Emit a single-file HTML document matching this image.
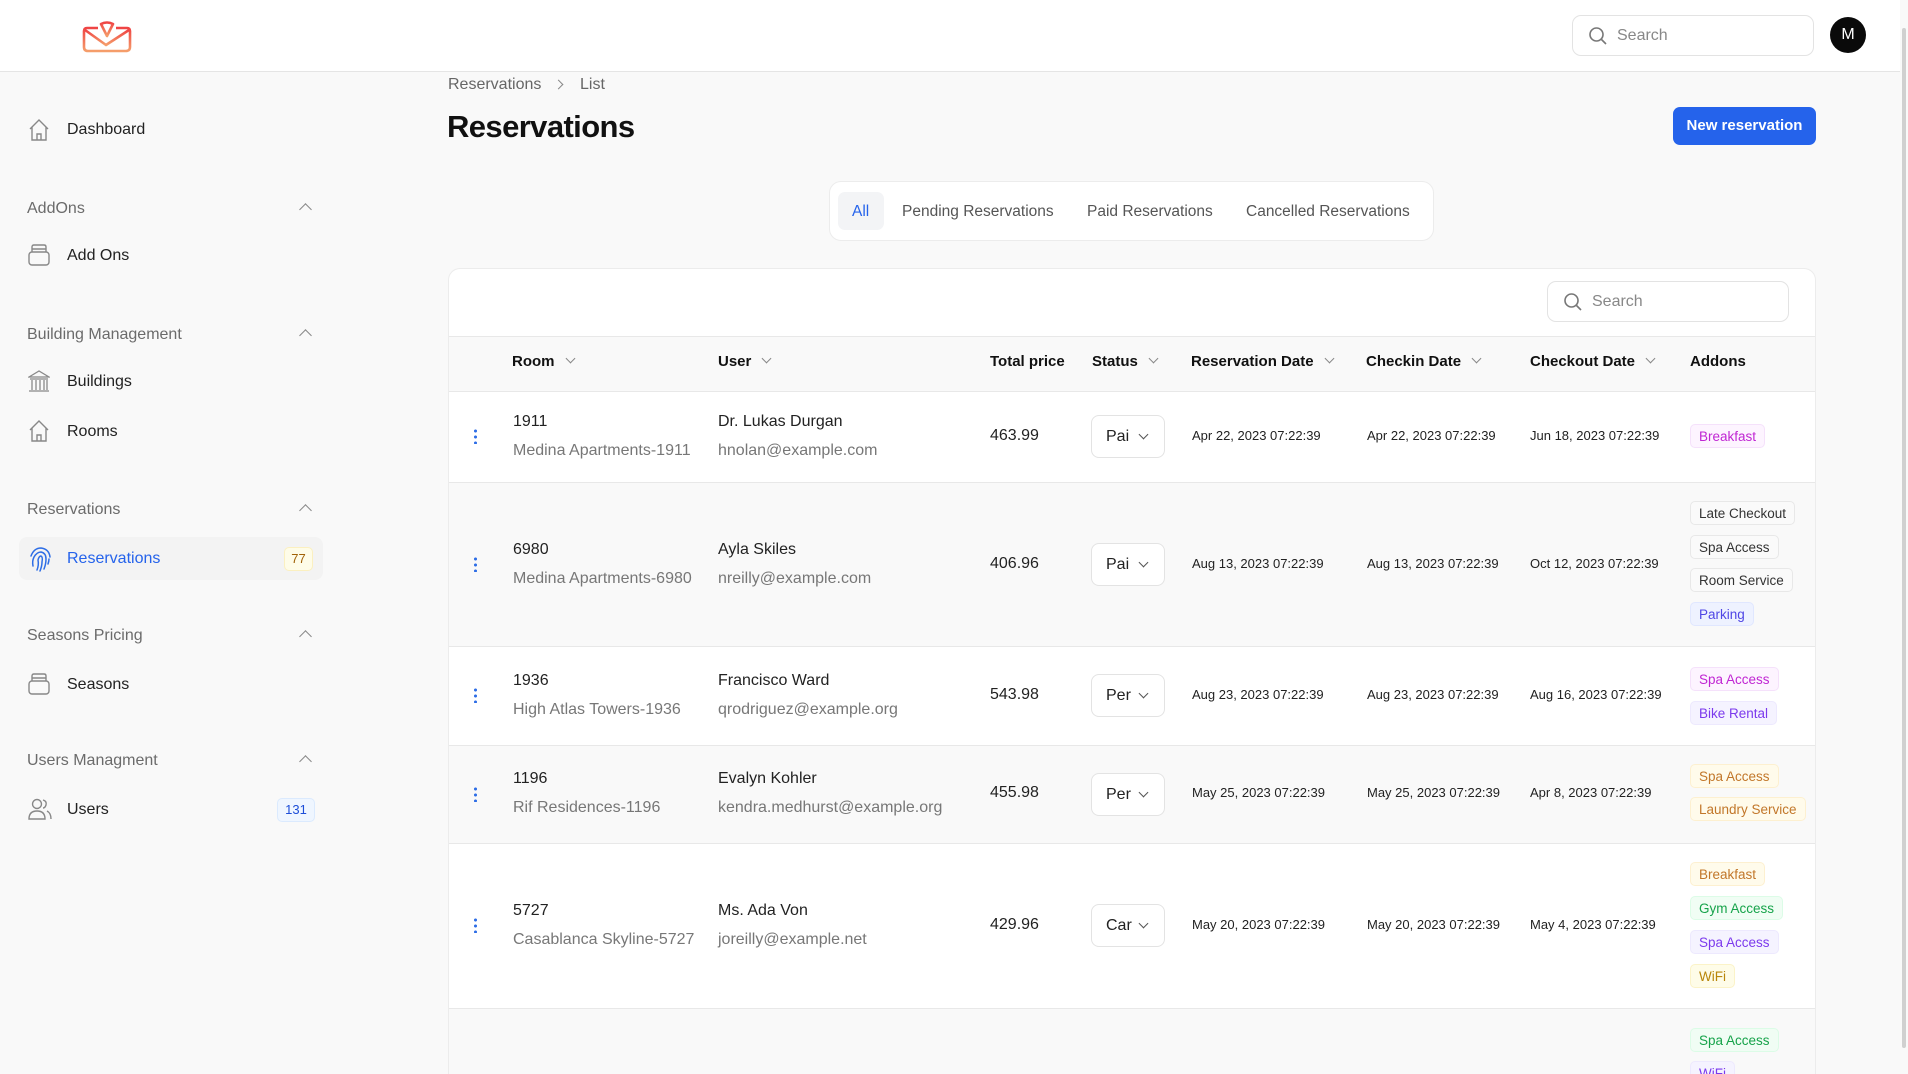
<!DOCTYPE html>
<html style="overflow:hidden;height:1074px"><head><meta charset="utf-8"><style>
*{box-sizing:border-box;margin:0;padding:0}
body{width:1908px;height:1074px;overflow:hidden;background:#f9f9f9;font-family:"Liberation Sans",sans-serif;color:#111;position:relative}
.a{position:absolute;white-space:nowrap}
.hdr{left:0;top:0;width:1900px;height:72px;background:#fff;border-bottom:1px solid #e5e5e5}
.sb{color:#6b6b6b;font-size:16px}
.nav{color:#222;font-size:16px}
.chev{width:9px;height:9px;border-left:1.6px solid #888;border-top:1.6px solid #888;transform:rotate(45deg)}
.dn{display:inline-block;width:7px;height:7px;border-right:1.4px solid #888;border-bottom:1.4px solid #888;transform:rotate(45deg);margin-left:12px;position:relative;top:-4px}
.th{font-size:15px;font-weight:bold;top:353px}
.t1{font-size:16px;color:#222}
.t2{font-size:16px;color:#777}
.dt{font-size:13px;color:#222}
.sel{width:74px;height:43px;background:#fff;border:1px solid #e3e3e3;border-radius:8px;font-size:16px;padding:12px 0 0 14px;color:#222}
.sel i{display:inline-block;width:7px;height:7px;border-right:1.5px solid #555;border-bottom:1.5px solid #555;transform:rotate(45deg);position:absolute;left:48px;top:15px}
.dots{width:3px;height:16px;background:radial-gradient(circle,#2e6ee6 1.4px,transparent 1.6px) 0 0/3px 6px repeat-y}
.bg{height:24px;border-radius:5px;font-size:13.5px;padding:4px 8px 0;border:1px solid}
.pk{color:#c026d3;background:#fdf4ff;border-color:#f5e1fb}
.gy{color:#333;background:#fafafa;border-color:#e8e8e8}
.in{color:#4f46e5;background:#eef2ff;border-color:#e0e7ff}
.pu{color:#7c3aed;background:#f5f3ff;border-color:#ede9fe}
.am{color:#c2772a;background:#fffbeb;border-color:#fdf0d0}
.gr{color:#16a34a;background:#f0fdf4;border-color:#dcfce7}
.yl{color:#b8860b;background:#fefce8;border-color:#fbf3c8}
</style></head><body>
<div class="a hdr"></div>
<svg class="a" style="left:82px;top:21px" width="50" height="32" viewBox="0 0 50 32"><defs><linearGradient id="g" x1="0" x2="0" y1="0" y2="1"><stop offset="0" stop-color="#ef4444"/><stop offset="1" stop-color="#f59e6b"/></linearGradient></defs><g fill="none" stroke="url(#g)" stroke-width="2.6" stroke-linejoin="round"><path d="M16 7 L5 7 Q2 7 2 10 L2 26 Q2 30 6 30 L44 30 Q48 30 48 26 L48 10 Q48 7 45 7 L34 7"/><path d="M3 9 L24 24 L47 9"/><path d="M19 3 Q25 0 31 3 L25 15 Z"/></g></svg>
<div class="a" style="left:1572px;top:15px;width:242px;height:41px;background:#fff;border:1px solid #e3e3e3;border-radius:9px"></div>
<svg class="a" style="left:1588px;top:26px" width="20" height="20" viewBox="0 0 20 20"><circle cx="8.5" cy="8.5" r="6.5" fill="none" stroke="#777" stroke-width="1.6"/><path d="M13.5 13.5 L18 18" stroke="#777" stroke-width="1.6"/></svg>
<div class="a" style="left:1617px;top:27px;font-size:16px;color:#888">Search</div>
<div class="a" style="left:1830px;top:17px;width:36px;height:36px;border-radius:50%;background:#0a0a0a;color:#fff;font-size:16px;text-align:center;line-height:36px">M</div>
<div class="a" style="left:1902px;top:28px;width:4px;height:1020px;background:#d0d0d0;border-radius:2px"></div>

<svg class="a" style="left:28px;top:118px" width="22" height="24" viewBox="0 0 22 24" fill="none" stroke="#888" stroke-width="1.4"><path d="M2 11 L11 2 L20 11 M4 9 V22 H18 V9 M9 22 V16 H13 V22"/></svg>
<div class="a nav" style="left:67px;top:121px">Dashboard</div>
<div class="a sb" style="left:27px;top:200px">AddOns</div><div class="a chev" style="left:301px;top:205px"></div>
<svg class="a" style="left:28px;top:244px" width="22" height="22" viewBox="0 0 22 22" fill="none" stroke="#888" stroke-width="1.4"><rect x="1" y="8" width="20" height="13" rx="3"/><path d="M4 8 V3 Q4 1 6 1 H16 Q18 1 18 3 V8 M4 5 H18"/></svg>
<div class="a nav" style="left:67px;top:247px">Add Ons</div>
<div class="a sb" style="left:27px;top:326px">Building Management</div><div class="a chev" style="left:301px;top:331px"></div>
<svg class="a" style="left:28px;top:370px" width="22" height="23" viewBox="0 0 22 23" fill="none" stroke="#888" stroke-width="1.3"><path d="M1 7 L11 1 L21 7 Z M2 9 H20 M4 10 V20 M8 10 V20 M12 10 V20 M16 10 V20 M19 10 V20 M1 21 H21"/></svg>
<div class="a nav" style="left:67px;top:373px">Buildings</div>
<svg class="a" style="left:28px;top:419px" width="22" height="24" viewBox="0 0 22 24" fill="none" stroke="#888" stroke-width="1.4"><path d="M2 11 L11 2 L20 11 M4 9 V22 H18 V9 M9 22 V16 H13 V22"/></svg>
<div class="a nav" style="left:67px;top:423px">Rooms</div>
<div class="a sb" style="left:27px;top:501px">Reservations</div><div class="a chev" style="left:301px;top:506px"></div>
<div class="a" style="left:19px;top:537px;width:304px;height:43px;background:#f3f3f3;border-radius:8px"></div>
<svg class="a" style="left:28px;top:546px" width="24" height="26" viewBox="0 0 24 26" fill="none" stroke="#2e6ee6" stroke-width="1.5" stroke-linecap="round"><path d="M3 10 Q6 2 13 2 Q21 3 22 11 M5 20 Q4 15 6 11 Q9 6 13 6 Q18 7 18 13 Q18 18 16 23 M9 24 Q11 19 10 14 Q11 10 13 10 Q15 11 14 16 Q14 20 12 25 M20 18 Q21 15 21 13"/></svg>
<div class="a" style="left:67px;top:550px;font-size:16px;color:#2563eb">Reservations</div>
<div class="a" style="left:284px;top:547px;width:29px;height:24px;background:#fefce8;border:1px solid #fbf0c0;border-radius:5px;color:#a16207;font-size:13px;text-align:center;line-height:22px">77</div>
<div class="a sb" style="left:27px;top:627px">Seasons Pricing</div><div class="a chev" style="left:301px;top:632px"></div>
<svg class="a" style="left:28px;top:673px" width="22" height="22" viewBox="0 0 22 22" fill="none" stroke="#888" stroke-width="1.4"><rect x="1" y="8" width="20" height="13" rx="3"/><path d="M4 8 V3 Q4 1 6 1 H16 Q18 1 18 3 V8 M4 5 H18"/></svg>
<div class="a nav" style="left:67px;top:676px">Seasons</div>
<div class="a sb" style="left:27px;top:752px">Users Managment</div><div class="a chev" style="left:301px;top:757px"></div>
<svg class="a" style="left:28px;top:798px" width="24" height="22" viewBox="0 0 24 22" fill="none" stroke="#888" stroke-width="1.4"><circle cx="9" cy="6" r="4.5"/><path d="M1 21 Q1 13 9 13 Q17 13 17 21 Z M15 2 Q19 3 18 7 Q17 10 15 10 M19 13 Q23 15 23 21"/></svg>
<div class="a nav" style="left:67px;top:801px">Users</div>
<div class="a" style="left:277px;top:798px;width:38px;height:24px;background:#eff6ff;border:1px solid #dbeafe;border-radius:5px;color:#1d4ed8;font-size:13px;text-align:center;line-height:22px">131</div>

<div class="a" style="left:448px;top:76px;font-size:16px;color:#666">Reservations</div>
<div class="a" style="left:555px;top:81px;width:7px;height:7px;border-right:1.4px solid #888;border-top:1.4px solid #888;transform:rotate(45deg)"></div>
<div class="a" style="left:580px;top:76px;font-size:16px;color:#666">List</div>
<div class="a" style="left:447px;top:109px;font-size:31px;font-weight:bold;letter-spacing:-0.6px">Reservations</div>
<div class="a" style="left:1673px;top:107px;width:143px;height:38px;background:#2563eb;border-radius:7px;color:#fff;font-size:15px;font-weight:bold;text-align:center;line-height:38px">New reservation</div>

<div class="a" style="left:829px;top:181px;width:605px;height:60px;background:#fff;border:1px solid #ececec;border-radius:12px"></div>
<div class="a" style="left:838px;top:192px;width:46px;height:38px;background:#f3f4f6;border-radius:7px"></div>
<div class="a" style="left:852px;top:203px;font-size:15.5px;color:#2563eb">All</div>
<div class="a" style="left:902px;top:203px;font-size:15.5px;color:#555">Pending Reservations</div>
<div class="a" style="left:1087px;top:203px;font-size:15.5px;color:#555">Paid Reservations</div>
<div class="a" style="left:1246px;top:203px;font-size:15.5px;color:#555">Cancelled Reservations</div>

<div class="a" style="left:448px;top:268px;width:1368px;height:806px;background:#fff;border:1px solid #ececec;border-bottom:none;border-radius:12px 12px 0 0;overflow:hidden">
 <div class="a" style="left:0;top:67px;width:1368px;height:56px;background:#f9f9f9;border-top:1px solid #e8e8e8;border-bottom:1px solid #e8e8e8"></div>
 <div class="a" style="left:0;top:213px;width:1368px;height:165px;background:#f9f9f9;border-top:1px solid #e8e8e8;border-bottom:1px solid #e8e8e8"></div>
 <div class="a" style="left:0;top:476px;width:1368px;height:99px;background:#f9f9f9;border-top:1px solid #e8e8e8;border-bottom:1px solid #e8e8e8"></div>
 <div class="a" style="left:0;top:739px;width:1368px;height:120px;background:#f9f9f9;border-top:1px solid #e8e8e8"></div>
</div>
<div class="a" style="left:1547px;top:281px;width:242px;height:41px;background:#fff;border:1px solid #e3e3e3;border-radius:9px"></div>
<svg class="a" style="left:1563px;top:292px" width="20" height="20" viewBox="0 0 20 20"><circle cx="8.5" cy="8.5" r="6.5" fill="none" stroke="#777" stroke-width="1.6"/><path d="M13.5 13.5 L18 18" stroke="#777" stroke-width="1.6"/></svg>
<div class="a" style="left:1592px;top:293px;font-size:16px;color:#888">Search</div>

<div class="a th" style="left:512px">Room<span class="dn"></span></div>
<div class="a th" style="left:718px">User<span class="dn"></span></div>
<div class="a th" style="left:990px">Total price</div>
<div class="a th" style="left:1092px">Status<span class="dn"></span></div>
<div class="a th" style="left:1191px">Reservation Date<span class="dn"></span></div>
<div class="a th" style="left:1366px">Checkin Date<span class="dn"></span></div>
<div class="a th" style="left:1530px">Checkout Date<span class="dn"></span></div>
<div class="a th" style="left:1690px">Addons</div>

<div class="a dots" style="left:474px;top:428px"></div>
<div class="a t1" style="left:513px;top:413px">1911</div><div class="a t2" style="left:513px;top:442px">Medina Apartments-1911</div>
<div class="a t1" style="left:718px;top:413px">Dr. Lukas Durgan</div><div class="a t2" style="left:718px;top:442px">hnolan@example.com</div>
<div class="a t1" style="left:990px;top:427px">463.99</div>
<div class="a sel" style="left:1091px;top:415px">Pai<i></i></div>
<div class="a dt" style="left:1192px;top:428px">Apr 22, 2023 07:22:39</div>
<div class="a dt" style="left:1367px;top:428px">Apr 22, 2023 07:22:39</div>
<div class="a dt" style="left:1530px;top:428px">Jun 18, 2023 07:22:39</div>
<div class="a bg pk" style="left:1690px;top:424px">Breakfast</div>

<div class="a dots" style="left:474px;top:556px"></div>
<div class="a t1" style="left:513px;top:541px">6980</div><div class="a t2" style="left:513px;top:570px">Medina Apartments-6980</div>
<div class="a t1" style="left:718px;top:541px">Ayla Skiles</div><div class="a t2" style="left:718px;top:570px">nreilly@example.com</div>
<div class="a t1" style="left:990px;top:555px">406.96</div>
<div class="a sel" style="left:1091px;top:543px">Pai<i></i></div>
<div class="a dt" style="left:1192px;top:556px">Aug 13, 2023 07:22:39</div>
<div class="a dt" style="left:1367px;top:556px">Aug 13, 2023 07:22:39</div>
<div class="a dt" style="left:1530px;top:556px">Oct 12, 2023 07:22:39</div>
<div class="a bg gy" style="left:1690px;top:501px">Late Checkout</div>
<div class="a bg gy" style="left:1690px;top:535px">Spa Access</div>
<div class="a bg gy" style="left:1690px;top:568px">Room Service</div>
<div class="a bg in" style="left:1690px;top:602px">Parking</div>

<div class="a dots" style="left:474px;top:687px"></div>
<div class="a t1" style="left:513px;top:672px">1936</div><div class="a t2" style="left:513px;top:701px">High Atlas Towers-1936</div>
<div class="a t1" style="left:718px;top:672px">Francisco Ward</div><div class="a t2" style="left:718px;top:701px">qrodriguez@example.org</div>
<div class="a t1" style="left:990px;top:686px">543.98</div>
<div class="a sel" style="left:1091px;top:674px">Per<i></i></div>
<div class="a dt" style="left:1192px;top:687px">Aug 23, 2023 07:22:39</div>
<div class="a dt" style="left:1367px;top:687px">Aug 23, 2023 07:22:39</div>
<div class="a dt" style="left:1530px;top:687px">Aug 16, 2023 07:22:39</div>
<div class="a bg pk" style="left:1690px;top:667px">Spa Access</div>
<div class="a bg pu" style="left:1690px;top:701px">Bike Rental</div>

<div class="a dots" style="left:474px;top:786px"></div>
<div class="a t1" style="left:513px;top:770px">1196</div><div class="a t2" style="left:513px;top:799px">Rif Residences-1196</div>
<div class="a t1" style="left:718px;top:770px">Evalyn Kohler</div><div class="a t2" style="left:718px;top:799px">kendra.medhurst@example.org</div>
<div class="a t1" style="left:990px;top:784px">455.98</div>
<div class="a sel" style="left:1091px;top:773px">Per<i></i></div>
<div class="a dt" style="left:1192px;top:785px">May 25, 2023 07:22:39</div>
<div class="a dt" style="left:1367px;top:785px">May 25, 2023 07:22:39</div>
<div class="a dt" style="left:1530px;top:785px">Apr 8, 2023 07:22:39</div>
<div class="a bg am" style="left:1690px;top:764px">Spa Access</div>
<div class="a bg am" style="left:1690px;top:797px">Laundry Service</div>

<div class="a dots" style="left:474px;top:917px"></div>
<div class="a t1" style="left:513px;top:902px">5727</div><div class="a t2" style="left:513px;top:931px">Casablanca Skyline-5727</div>
<div class="a t1" style="left:718px;top:902px">Ms. Ada Von</div><div class="a t2" style="left:718px;top:931px">joreilly@example.net</div>
<div class="a t1" style="left:990px;top:916px">429.96</div>
<div class="a sel" style="left:1091px;top:904px">Car<i></i></div>
<div class="a dt" style="left:1192px;top:917px">May 20, 2023 07:22:39</div>
<div class="a dt" style="left:1367px;top:917px">May 20, 2023 07:22:39</div>
<div class="a dt" style="left:1530px;top:917px">May 4, 2023 07:22:39</div>
<div class="a bg am" style="left:1690px;top:862px">Breakfast</div>
<div class="a bg gr" style="left:1690px;top:896px">Gym Access</div>
<div class="a bg pu" style="left:1690px;top:930px">Spa Access</div>
<div class="a bg yl" style="left:1690px;top:964px">WiFi</div>

<div class="a bg gr" style="left:1690px;top:1028px">Spa Access</div>
<div class="a" style="left:1690px;top:1061px;width:46px;height:13px;overflow:hidden"><div class="a bg pu" style="left:0;top:0">WiFi</div></div>
</body></html>
